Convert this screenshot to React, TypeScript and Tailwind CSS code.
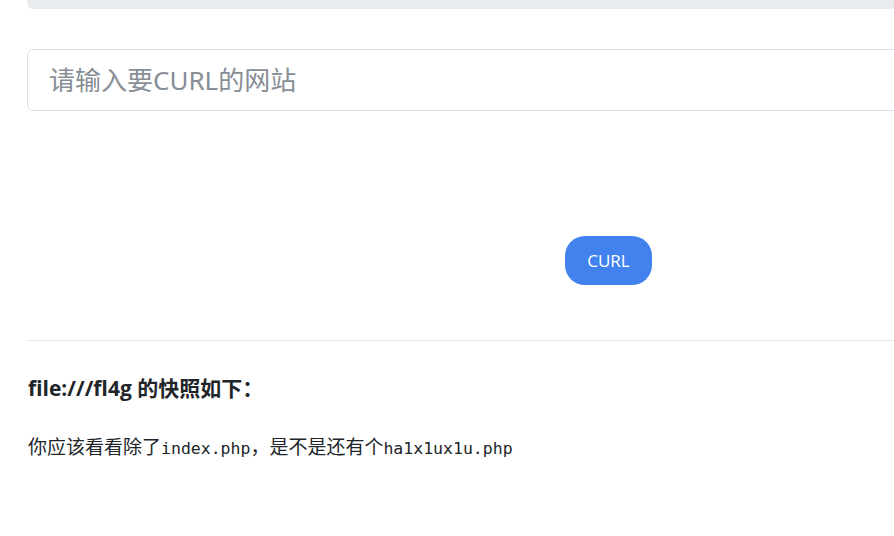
import React from "react";

export default function App() {
  return (
    <div className="w-[894px] h-[536px] overflow-hidden bg-white">
      <div className="ml-[27px] w-[1163px] flex flex-col">
        <div className="h-[9px] bg-[#e9ecef] rounded-b-[7px]" />
        <input
          className="mt-[40px] h-[62px] w-full border border-[#dee2e6] rounded-[6px] px-[21px] text-[26px] text-[#495057] placeholder:text-[#878e95] outline-none font-['Noto_Sans','Noto_Sans_CJK_SC',sans-serif]"
          placeholder="请输入要CURL的网站"
        />
        <div className="mt-[125px] flex justify-center">
          <button className="h-[49px] w-[87px] rounded-[20px] bg-[#4182ee] text-white text-[17px] flex items-center justify-center font-['Open_Sans','Noto_Sans',sans-serif]">
            CURL
          </button>
        </div>
        <div className="mt-[55px] h-px bg-[#e6e6e6]" />
        <h5 className="mt-[34px] text-[21px] leading-[26px] font-bold text-[#212529] pl-px font-['Open_Sans','Noto_Sans_CJK_SC',sans-serif]">
          file:///fl4g 的快照如下：
        </h5>
        <p className="mt-[33px] leading-[24px] text-[#212529] text-[16.5px] pl-px font-['DejaVu_Sans_Mono','Noto_Sans_CJK_SC',monospace]">
          <span className="text-[19px] font-['Noto_Sans_CJK_SC',serif]">你应该看看除了</span>
          index.php
          <span className="text-[19px] font-['Noto_Sans_CJK_SC',serif]">，是不是还有个</span>
          ha1x1ux1u.php
        </p>
      </div>
    </div>
  );
}
